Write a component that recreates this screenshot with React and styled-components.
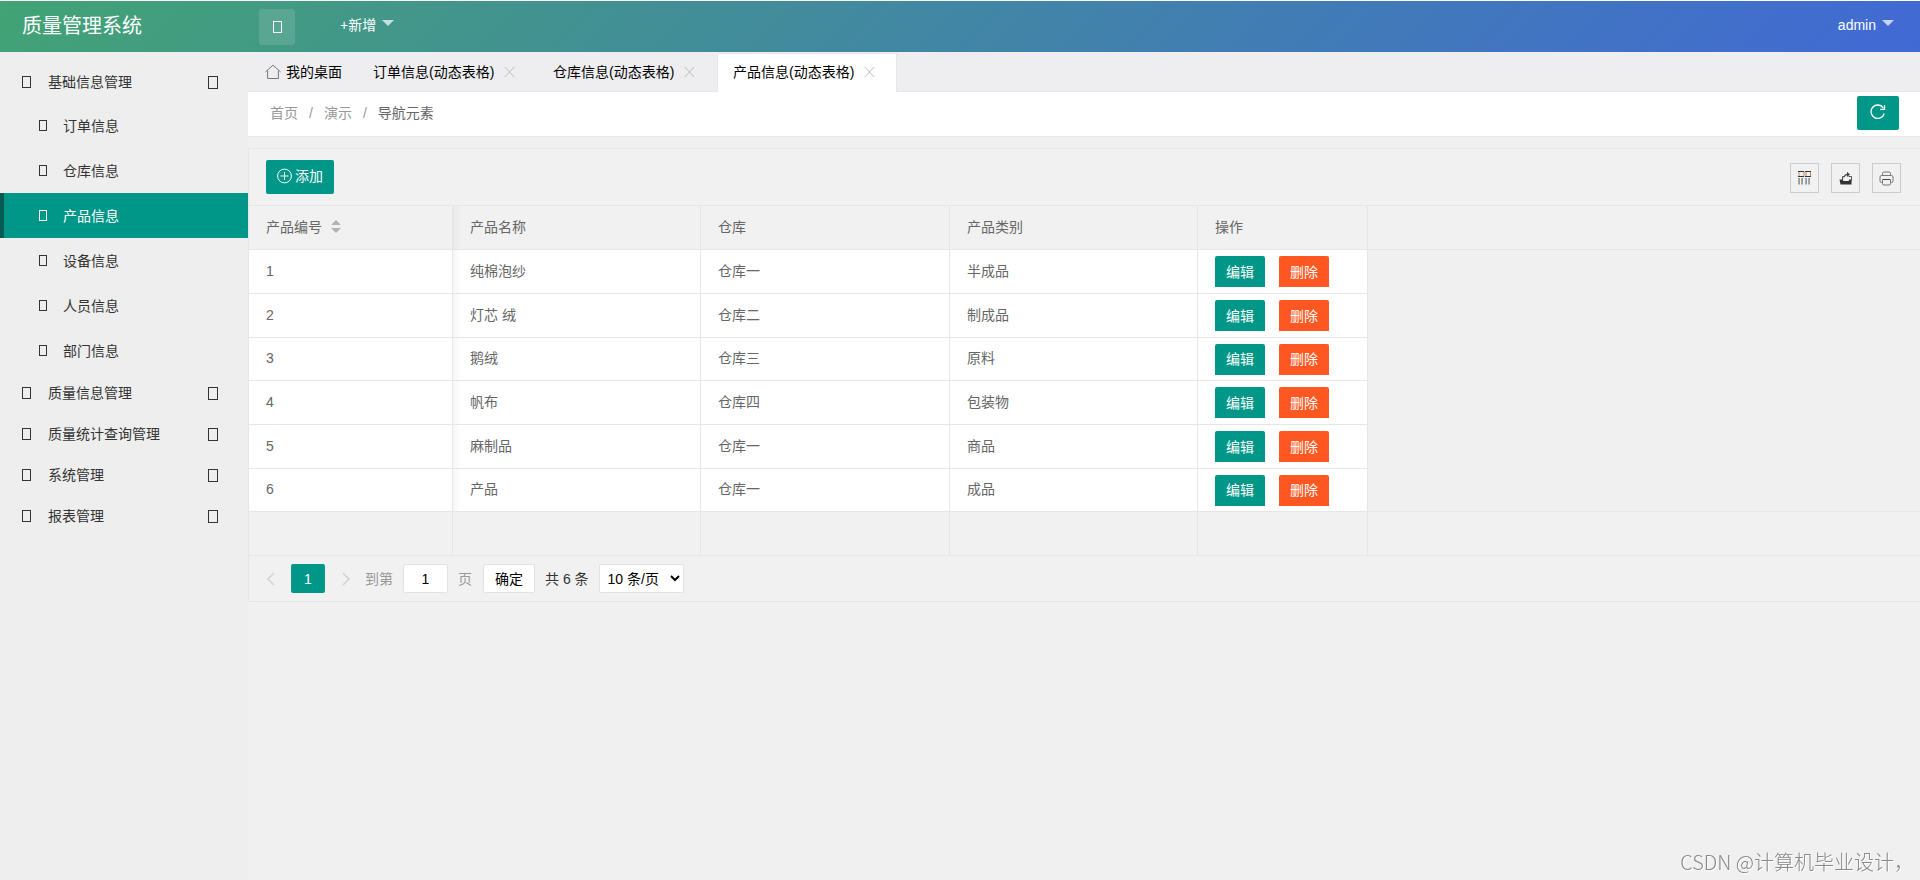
import React, { useState } from "react";
import styled, { createGlobalStyle, css } from "styled-components";

const TEAL = "#009688";
const LINE = "#e6e6e6";

const GlobalStyle = createGlobalStyle`
  *, *::before, *::after { box-sizing: border-box; }
  body {
    margin: 0;
    background: #f0f0f0;
    color: #333;
    font: 14px/24px "Liberation Sans", "Noto Sans CJK SC", sans-serif;
  }
  button, input, select { font: inherit; color: inherit; margin: 0; }
  button { padding: 0; border: 0; background: none; cursor: pointer; }
  a { color: inherit; text-decoration: none; }
  svg { display: block; flex: none; }
`;

const Page = styled.div`
  display: flex;
  flex-direction: column;
  min-height: 100vh;
  border-top: 1px solid #fff;
`;

const Header = styled.header`
  display: flex;
  align-items: center;
  height: 51px;
  padding-right: 26px;
  background: linear-gradient(135deg, #42a375, #4169d5);
  color: #fff;
`;

const Brand = styled.h1`
  width: 248px;
  margin: 0;
  padding: 0 0 2px 22px;
  font-size: 20px;
  font-weight: 400;
`;

const MenuToggle = styled.button`
  display: flex;
  align-items: center;
  justify-content: center;
  width: 36px;
  height: 36px;
  margin: 0 45px 0 11px;
  border-radius: 3px;
  background: rgba(255, 255, 255, 0.12);
`;

const HeaderMenu = styled.button`
  display: flex;
  align-items: center;
  gap: 6px;
  padding-bottom: 4px;
  margin-left: ${(p) => (p.$end ? "auto" : 0)};
`;

const Caret = styled.span`
  border: 6px solid transparent;
  border-top-color: rgba(255, 255, 255, 0.7);
  border-bottom: 0;
  margin-bottom: 4px;
`;

const glyphSizes = { small: [8, 11], medium: [9, 12], large: [10, 13] };

const Glyph = styled.span`
  flex: none;
  width: ${(p) => glyphSizes[p.$size][0]}px;
  height: ${(p) => glyphSizes[p.$size][1]}px;
  border: 1px solid currentColor;
`;

const Body = styled.div`
  display: flex;
  flex: 1;
`;

const Sidebar = styled.nav`
  flex: none;
  width: 248px;
  padding-top: 10px;
  background: #eee;
`;

const Group = styled.button`
  display: flex;
  align-items: center;
  width: 100%;
  height: 41px;
  padding: 0 30px 1px 22px;
  text-align: left;
`;

const GroupLabel = styled.span`
  flex: 1;
  padding-left: 17px;
`;

const SubItem = styled.a`
  display: flex;
  align-items: center;
  gap: 16px;
  height: 45px;
  padding-left: 35px;
  border-left: 4px solid transparent;
  ${(p) =>
    p.$active &&
    css`
      border-left-color: #055a52;
      background: ${TEAL};
      color: #fff;
    `}
`;

const Main = styled.main`
  flex: 1;
  min-width: 0;
`;

const TabBar = styled.div`
  display: flex;
  align-items: flex-end;
  height: 40px;
  background: #eeeef0;
  box-shadow: inset 0 -1px ${LINE};
  color: #000;
`;

const HomeTab = styled.button`
  display: flex;
  align-items: center;
  gap: 5px;
  width: 109px;
  height: 39px;
  padding: 0 0 2px 17px;
`;

const Tab = styled.div`
  display: flex;
  align-items: center;
  justify-content: space-between;
  width: 180px;
  height: 39px;
  padding: 0 21px 3px 15px;
  border: 1px solid transparent;
  border-bottom: 0;
  ${(p) =>
    p.$active &&
    css`
      border-color: ${LINE};
      border-radius: 2px 2px 0 0;
      background: #fff;
    `}
`;

const CrumbBar = styled.div`
  display: flex;
  align-items: center;
  justify-content: space-between;
  height: 45px;
  padding: 0 21px 2px 22px;
  border-bottom: 1px solid ${LINE};
  background: #fff;
`;

const Crumbs = styled.div`
  display: flex;
  gap: 11px;
  color: #999;
`;

const Current = styled.span`
  color: #666;
`;

const PrimaryButton = styled.button`
  display: flex;
  align-items: center;
  gap: 3px;
  height: 34px;
  padding: 0 ${(p) => (p.$icon ? 13 : 11)}px 2px;
  border-radius: 2px;
  background: ${TEAL};
  color: #fff;
`;

const Card = styled.section`
  margin-top: 11px;
  border: 1px solid ${LINE};
  border-right: 0;
  background: #f1f1f1;
`;

const Toolbar = styled.div`
  display: flex;
  align-items: center;
  justify-content: space-between;
  height: 56px;
  padding: 0 19px 0 17px;
`;

const Tools = styled.div`
  display: flex;
  gap: 12px;
  padding-top: 2px;
`;

const ToolButton = styled.button`
  display: flex;
  align-items: center;
  justify-content: center;
  width: 29px;
  height: 30px;
  border: 1px solid #ccc;
  color: #333;
`;

const Grid = styled.table`
  width: 100%;
  table-layout: fixed;
  border-spacing: 0;
  border-top: 1px solid ${LINE};
  color: #666;

  tr { height: 44px; }
  tbody tr:nth-child(3n) { height: 43px; }

  th, td {
    padding: 0 17px 2px;
    border: 0 solid ${LINE};
    border-width: 0 1px 1px 0;
    font-weight: 400;
    text-align: left;
  }
  th:last-child, td:last-child { border-right: 0; }
  tbody td { background: #fff; }
  tbody td:last-child { border-bottom: 0; background: #f0f0f0; }
  tbody tr:last-child td { border-bottom: 1px solid ${LINE}; }
  thead th:nth-child(2), tbody td:nth-child(2) {
    background-image: linear-gradient(to right, rgba(0, 0, 0, 0.03), transparent 9px);
  }
`;

const SortButton = styled.button`
  display: flex;
  align-items: center;
  gap: 9px;
`;

const ActionCell = styled.td`
  && { padding-bottom: 0; }
`;

const Actions = styled.div`
  display: flex;
  gap: 14px;
`;

const RowButton = styled.button`
  width: 50px;
  height: 31px;
  border-radius: 2px 2px 0 0;
  background: ${(p) => (p.$danger ? "#ff5722" : TEAL)};
  color: #fff;
`;

const Pager = styled.div`
  display: flex;
  align-items: center;
  gap: 10px;
  height: 45px;
  padding-left: 17px;
`;

const Arrow = styled.button`
  display: flex;
  justify-content: center;
  width: 9px;
  color: #d2d2d2;
`;

const PageNumber = styled.button`
  width: 34px;
  height: 29px;
  margin: 0 6px;
  border-radius: 2px;
  background: ${TEAL};
  color: #fff;
`;

const JumpLabel = styled.label`
  display: flex;
  align-items: center;
  gap: 10px;
  margin: 0 1px 0 5px;
  color: #999;
`;

const boxed = css`
  height: 29px;
  border: 1px solid #e2e2e2;
  border-radius: 2px;
  background: #fff;
  color: #000;
`;

const JumpInput = styled.input`
  ${boxed}
  width: 45px;
  padding: 0;
  text-align: center;
`;

const ConfirmButton = styled.button`
  ${boxed}
  width: 52px;
`;

const PageSize = styled.select`
  ${boxed}
  width: 85px;
  padding: 0 4px;
`;

const Watermark = styled.div`
  position: fixed;
  right: 6px;
  bottom: 6px;
  color: #888;
  font: 20px/24px "Noto Sans CJK SC", sans-serif;
  font-weight: 300;
  text-shadow: 1px 1px #fff;
  pointer-events: none;
`;

const HomeIcon = () => (
  <svg width="16" height="16" viewBox="0 0 16 16" fill="none" stroke="#777">
    <path d="M.5 7.8 8 1.2l7.5 6.6M2.6 6.5v8h10.8v-8" />
  </svg>
);

const CloseIcon = () => (
  <svg width="11" height="12" viewBox="0 0 11 12" fill="none" stroke="#bbb">
    <path d="m.8 1 9.4 10M10.2 1 .8 11" />
  </svg>
);

const RefreshIcon = () => (
  <svg width="16" height="16" viewBox="0 0 16 16" fill="none" stroke="currentColor" strokeWidth="1.3">
    <path d="M14.2 9.5A6.700 6.700 0 1 1 13.2 3.8" />
    <path d="M14.5 1v4.300h-4.300" />
  </svg>
);

const AddIcon = () => (
  <svg width="15" height="16" viewBox="0 0 15 16" fill="none" stroke="currentColor">
    <circle cx="7.5" cy="8" r="6.9" />
    <path d="M3.5 8h8M7.5 4v8" />
  </svg>
);

const ColumnsIcon = () => (
  <svg width="15" height="14" viewBox="0 0 15 14" fill="none">
    <path d="M2 .5v5M7 .5v5M9 .5v5M13.500 .5v5" stroke="#b98a60" />
    <path d="M1 .5h6M8 .5h6M1 5.500h6M8 5.500h6" stroke="#333" />
    <path d="M1.500 7v6.500M4.500 7v6.500M8.500 7v6.500M11.500 7v6.500" stroke="#d0a070" />
    <path d="M2.500 7v6.500M5.500 7v6.500M9.500 7v6.500M12.500 7v6.500" stroke="#6aa5d8" />
  </svg>
);

const ExportIcon = () => (
  <svg width="14" height="14" viewBox="0 0 14 14">
    <path d="M.5 8.500h3l1 1.500h5l1-1.500h2V13.500h-11z" fill="#333" />
    <path d="M3.500 9V5.500h2.500M9.500 5.500h3V10" fill="none" stroke="#555" />
    <path d="M4.500 8C4.500 4.500 6 3 8 2.800V.8L11 3.500 8 6V4.300C6.500 4.500 5.500 5.500 4.500 8z" fill="#444" />
  </svg>
);

const PrintIcon = () => (
  <svg width="15" height="15" viewBox="0 0 15 15" fill="none" stroke="#777">
    <path d="M3.500 4.500v-2a1.500 1.500 0 0 1 1.500-1.500h5a1.500 1.500 0 0 1 1.500 1.500v2" />
    <path d="M3.500 11.500h-1a1.500 1.500 0 0 1-1.500-1.500V6a1.500 1.500 0 0 1 1.500-1.500h10A1.500 1.500 0 0 1 14 6v4a1.500 1.500 0 0 1-1.500 1.500h-1" />
    <path d="M3.500 8.500h8v4a1.500 1.500 0 0 1-1.500 1.500H5a1.500 1.500 0 0 1-1.500-1.500z" />
    <path d="M4 8.500h7" stroke="#444" />
  </svg>
);

const SortIcon = () => (
  <svg width="10" height="13" viewBox="0 0 10 13" fill="#b2b2b2">
    <path d="M0 5 5 0l5 5zM0 8h10l-5 5z" />
  </svg>
);

const Chevron = ({ d }) => (
  <svg width="8" height="14" viewBox="0 0 8 14" fill="none" stroke="currentColor" strokeWidth="1.5">
    <path d={d} />
  </svg>
);

const MENU = [
  {
    label: "基础信息管理",
    open: true,
    items: ["订单信息", "仓库信息", "产品信息", "设备信息", "人员信息", "部门信息"],
  },
  { label: "质量信息管理" },
  { label: "质量统计查询管理" },
  { label: "系统管理" },
  { label: "报表管理" },
];

const TABS = ["订单信息(动态表格)", "仓库信息(动态表格)", "产品信息(动态表格)"];

const ROWS = [
  [1, "纯棉泡纱", "仓库一", "半成品"],
  [2, "灯芯 绒", "仓库二", "制成品"],
  [3, "鹅绒", "仓库三", "原料"],
  [4, "帆布", "仓库四", "包装物"],
  [5, "麻制品", "仓库一", "商品"],
  [6, "产品", "仓库一", "成品"],
];

const COLUMN_WIDTHS = [204, 248, 249, 248, 170];

function SideMenu() {
  return (
    <Sidebar>
      {MENU.map((group) => (
        <React.Fragment key={group.label}>
          <Group aria-expanded={!!group.open}>
            <Glyph $size="medium" />
            <GroupLabel>{group.label}</GroupLabel>
            <Glyph $size="large" />
          </Group>
          {group.items?.map((item) => (
            <SubItem key={item} href="#" $active={item === "产品信息"}>
              <Glyph $size="small" />
              {item}
            </SubItem>
          ))}
        </React.Fragment>
      ))}
    </Sidebar>
  );
}

function ProductTable() {
  return (
    <Grid>
      <colgroup>
        {COLUMN_WIDTHS.map((width, i) => (
          <col key={i} width={width} />
        ))}
        <col />
      </colgroup>
      <thead>
        <tr>
          <th>
            <SortButton>
              产品编号
              <SortIcon />
            </SortButton>
          </th>
          <th>产品名称</th>
          <th>仓库</th>
          <th>产品类别</th>
          <th>操作</th>
          <th />
        </tr>
      </thead>
      <tbody>
        {ROWS.map((row) => (
          <tr key={row[0]}>
            {row.map((value, i) => (
              <td key={i}>{value}</td>
            ))}
            <ActionCell>
              <Actions>
                <RowButton>编辑</RowButton>
                <RowButton $danger>删除</RowButton>
              </Actions>
            </ActionCell>
            <td />
          </tr>
        ))}
      </tbody>
      <tfoot>
        <tr>
          <td />
          <td />
          <td />
          <td />
          <td />
          <td />
        </tr>
      </tfoot>
    </Grid>
  );
}

function Pagination() {
  const [page, setPage] = useState("1");
  return (
    <Pager>
      <Arrow aria-label="上一页">
        <Chevron d="M7 1 1 7l6 6" />
      </Arrow>
      <PageNumber>1</PageNumber>
      <Arrow aria-label="下一页">
        <Chevron d="m1 1 6 6-6 6" />
      </Arrow>
      <JumpLabel>
        到第
        <JumpInput value={page} onChange={(e) => setPage(e.target.value)} />
        页
      </JumpLabel>
      <ConfirmButton>确定</ConfirmButton>
      <span>共 6 条</span>
      <PageSize aria-label="每页条数" defaultValue="10">
        <option value="10">10 条/页</option>
        <option value="20">20 条/页</option>
      </PageSize>
    </Pager>
  );
}

export default function App() {
  return (
    <Page>
      <GlobalStyle />
      <Header>
        <Brand>质量管理系统</Brand>
        <MenuToggle aria-label="菜单">
          <Glyph $size="medium" />
        </MenuToggle>
        <HeaderMenu>
          +新增
          <Caret />
        </HeaderMenu>
        <HeaderMenu $end>
          admin
          <Caret />
        </HeaderMenu>
      </Header>
      <Body>
        <SideMenu />
        <Main>
          <TabBar>
            <HomeTab>
              <HomeIcon />
              我的桌面
            </HomeTab>
            {TABS.map((tab, i) => (
              <Tab key={tab} $active={i === 2}>
                <button>{tab}</button>
                <button aria-label="关闭">
                  <CloseIcon />
                </button>
              </Tab>
            ))}
          </TabBar>
          <CrumbBar>
            <Crumbs>
              <a href="#">首页</a>
              <span>/</span>
              <a href="#">演示</a>
              <span>/</span>
              <Current>导航元素</Current>
            </Crumbs>
            <PrimaryButton $icon aria-label="刷新">
              <RefreshIcon />
            </PrimaryButton>
          </CrumbBar>
          <Card>
            <Toolbar>
              <PrimaryButton>
                <AddIcon />
                添加
              </PrimaryButton>
              <Tools>
                <ToolButton aria-label="筛选列">
                  <ColumnsIcon />
                </ToolButton>
                <ToolButton aria-label="导出">
                  <ExportIcon />
                </ToolButton>
                <ToolButton aria-label="打印">
                  <PrintIcon />
                </ToolButton>
              </Tools>
            </Toolbar>
            <ProductTable />
            <Pagination />
          </Card>
        </Main>
      </Body>
      <Watermark>CSDN @计算机毕业设计，</Watermark>
    </Page>
  );
}
